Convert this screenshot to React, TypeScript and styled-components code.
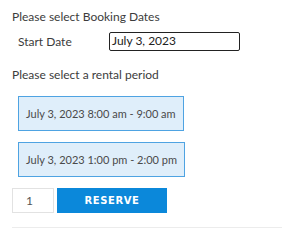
import styled, { createGlobalStyle } from "styled-components";

const GlobalStyle = createGlobalStyle`
  body {
    margin: 0;
    background: #fff;
    font-family: Lato, "Liberation Sans", sans-serif;
  }
`;

const Panel = styled.div`
  width: 270px;
  padding: 9px 0 0 12px;
  color: #3c3c3c;
  font-size: 12px;
`;

const Heading = styled.div`
  line-height: 16px;
`;

const DateRow = styled.div`
  display: flex;
  align-items: center;
  margin-top: 7px;
  padding-left: 6px;
`;

const Label = styled.span`
  width: 91px;
`;

const DateInput = styled.div`
  box-sizing: border-box;
  width: 131px;
  height: 19px;
  border: 1.5px solid #222;
  border-radius: 2px;
  padding-left: 2px;
  line-height: 16px;
  color: #222;
`;

const SubHeading = styled.div`
  margin-top: 16px;
  line-height: 16px;
`;

const SlotList = styled.div`
  display: flex;
  flex-direction: column;
  align-items: flex-start;
  gap: 11px;
  margin-top: 13px;
  padding-left: 6px;
`;

const Slot = styled.button`
  box-sizing: border-box;
  height: 35px;
  padding: 0 7px;
  background: #dfeefa;
  border: 1px solid #4ea3e2;
  color: #4a4a4a;
  font-family: Lato, "Liberation Sans", sans-serif;
  font-size: 11px;
  cursor: pointer;
`;

const ReserveRow = styled.div`
  display: flex;
  gap: 3px;
  margin-top: 11px;
`;

const Qty = styled.div`
  box-sizing: border-box;
  width: 42px;
  height: 25px;
  border: 1px solid #e2e2e2;
  padding-left: 13px;
  line-height: 23px;
  color: #555;
`;

const Reserve = styled.button`
  width: 110px;
  height: 25px;
  border: none;
  background: #0b88da;
  color: #fff;
  font-family: Verdana, "DejaVu Sans", sans-serif;
  font-weight: bold;
  font-size: 10px;
  letter-spacing: 0.6px;
`;

const Divider = styled.div`
  margin-top: 14px;
  height: 1px;
  background: #ececec;
`;

export default function App() {
  return (
    <>
      <GlobalStyle />
      <Panel>
        <Heading>Please select Booking Dates</Heading>
        <DateRow>
          <Label>Start Date</Label>
          <DateInput>July 3, 2023</DateInput>
        </DateRow>
        <SubHeading>Please select a rental period</SubHeading>
        <SlotList>
          <Slot>July 3, 2023 8:00 am - 9:00 am</Slot>
          <Slot>July 3, 2023 1:00 pm - 2:00 pm</Slot>
        </SlotList>
        <ReserveRow>
          <Qty>1</Qty>
          <Reserve>RESERVE</Reserve>
        </ReserveRow>
        <Divider />
      </Panel>
    </>
  );
}
